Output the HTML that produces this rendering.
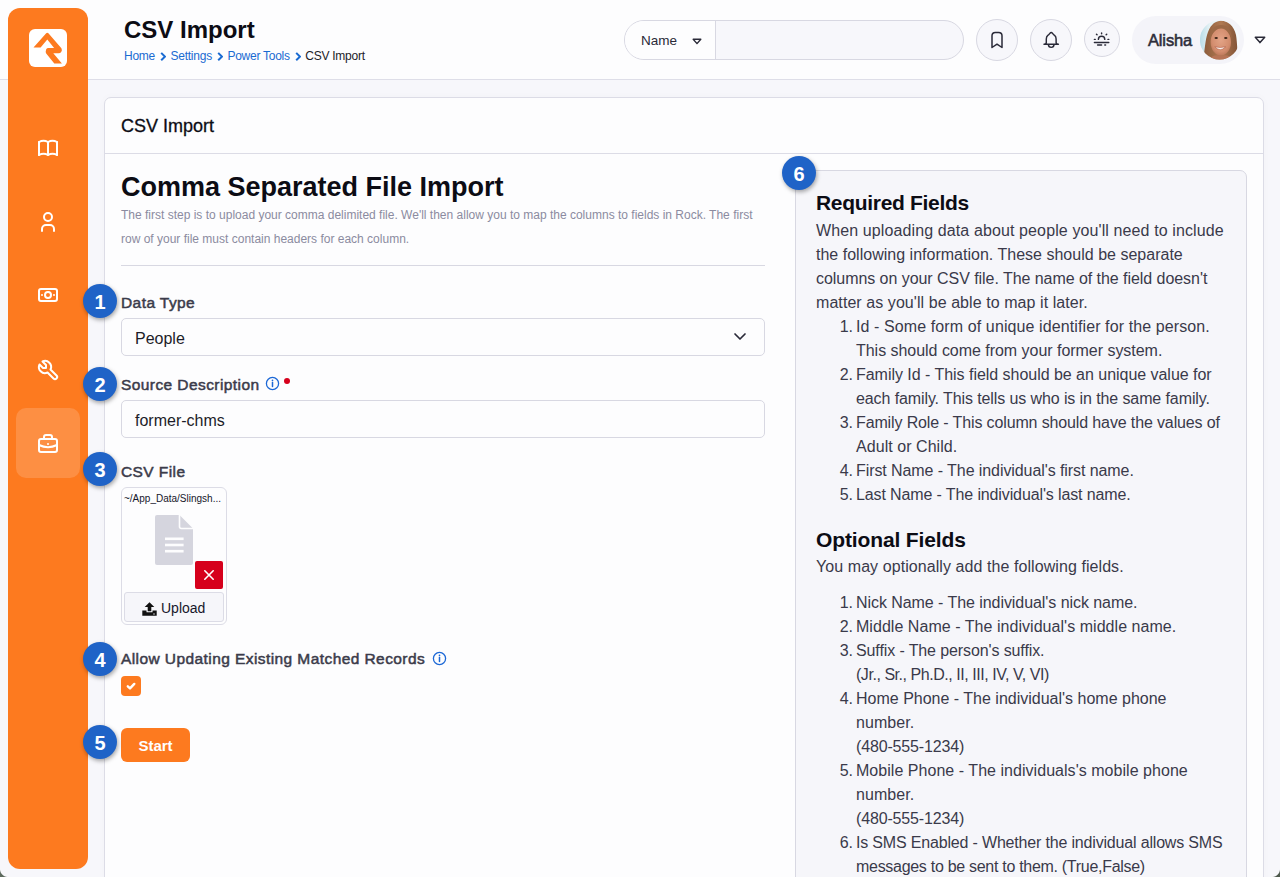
<!DOCTYPE html>
<html><head><meta charset="utf-8">
<style>
*{box-sizing:border-box;margin:0;padding:0}
html,body{width:1280px;height:877px;overflow:hidden}
body{position:relative;background:#f7f7fb;font-family:"Liberation Sans",sans-serif;color:#24242f}
.abs{position:absolute}
#hdr{left:0;top:0;width:1280px;height:80px;background:#fdfdfe;border-bottom:1px solid #dedee8}
#side{left:8px;top:8px;width:80px;height:861px;background:#fd7a1f;border-radius:12px}
#active{left:16px;top:408px;width:64px;height:70px;border-radius:10px;background:rgba(255,255,255,.16)}
#title{left:124px;top:15px;font-size:24px;font-weight:bold;color:#0c0c14;line-height:30px;white-space:nowrap}
#crumb{left:124px;top:48px;font-size:12px;letter-spacing:-0.25px;line-height:16px;white-space:nowrap;color:#1c1c28}
#crumb span.a{color:#1a6bd2}
#crumb svg{display:inline-block;vertical-align:-1px;margin:0 4.5px 0 5px}
#search{left:624px;top:20px;width:340px;height:40px;border:1px solid #d8d8e2;border-radius:20px;background:#f7f7fb;overflow:hidden}
#search .nm{position:absolute;left:0;top:0;width:91px;height:38px;background:#fdfdfe;border-right:1px solid #d8d8e2}
.cbtn{position:absolute;border:1px solid #d8d8e2;border-radius:50%;background:#f7f7fb}
#user{left:1132px;top:16px;width:112px;height:48px;border-radius:24px;background:#f4f4f9}
#card{left:104px;top:97px;width:1160px;height:800px;background:#fdfdfe;border:1px solid #dcdce6;border-radius:7px;box-shadow:0 0 8px rgba(30,30,80,.025)}
#cardhdr{left:0;top:0;width:100%;height:56px;border-bottom:1px solid #dcdce6}
#cardtitle{left:16px;top:17px;font-size:18px;line-height:22px;color:#0c0c14;-webkit-text-stroke:0.3px #0c0c14}
.badge{position:absolute;width:34px;height:34px;border-radius:50%;background:#1f63c7;color:#fff;font-weight:bold;font-size:20px;line-height:37px;text-align:center;box-shadow:1px 2px 4px rgba(0,0,0,.35)}
.lbl{position:absolute;left:121px;font-size:15.5px;font-weight:normal;-webkit-text-stroke:0.5px #3b3b4a;letter-spacing:0.42px;color:#3b3b4a;white-space:nowrap;line-height:18px}
.inp{position:absolute;left:121px;width:644px;height:38px;border:1px solid #d8d8e2;border-radius:5px;background:#fdfdfe;font-size:16px;line-height:40px;padding-left:13px;color:#1c1c28}
#panel{left:795px;top:170px;width:452px;height:720px;background:#f6f6fa;border:1px solid #d8d8e2;border-radius:7px}
.pt{position:absolute;white-space:nowrap;font-size:16px;color:#3a3a4a;line-height:24px}
.num{left:816px;width:37px;text-align:right}
.ph{position:absolute;white-space:nowrap;font-size:21px;font-weight:bold;color:#0c0c14;line-height:26px}
</style></head><body>
<div id="hdr" class="abs"></div>
<div id="side" class="abs"></div>
<svg class="abs" style="left:29px;top:29px" width="38" height="38" viewBox="0 0 38 38">
<rect x="0" y="0" width="38" height="38" rx="6" fill="#fff"/>
<path d="M4.5 18.6 L17.2 4.2 Q18.3 3.1 19.4 4.2 L32.4 19.3 Q33.5 21.2 32.2 23.1 Q31.2 24.3 29.6 24.3 L24.3 24.3 L32.9 34.4 L25.3 34.4 L17.2 24.6 Q16.2 23.2 17.1 20.4 Q17.8 19.1 19.4 19.1 L25.1 19.1 L18.3 10.5 L11.6 18.6 Z" fill="#fd7a1f"/>
</svg>
<div id="active" class="abs"></div>

<svg class="abs" style="left:36px;top:135.5px" width="24" height="24" viewBox="0 0 24 24" fill="none" stroke="#fff" stroke-width="2" stroke-linecap="round" stroke-linejoin="round"><path d="M3 19a9 9 0 0 1 9 0a9 9 0 0 1 9 0"/><path d="M3 6a9 9 0 0 1 9 0a9 9 0 0 1 9 0"/><path d="M3 6l0 13"/><path d="M12 6l0 13"/><path d="M21 6l0 13"/></svg>
<svg class="abs" style="left:36px;top:209.5px" width="24" height="24" viewBox="0 0 24 24" fill="none" stroke="#fff" stroke-width="2" stroke-linecap="round" stroke-linejoin="round"><path d="M8 7a4 4 0 1 0 8 0a4 4 0 0 0 -8 0"/><path d="M6 21v-2a4 4 0 0 1 4 -4h4a4 4 0 0 1 4 4v2"/></svg>
<svg class="abs" style="left:36px;top:283px" width="24" height="24" viewBox="0 0 24 24" fill="none" stroke="#fff" stroke-width="2" stroke-linecap="round" stroke-linejoin="round"><path d="M9 12a3 3 0 1 0 6 0a3 3 0 1 0 -6 0"/><path d="M3 8a2 2 0 0 1 2 -2h14a2 2 0 0 1 2 2v8a2 2 0 0 1 -2 2h-14a2 2 0 0 1 -2 -2z"/><path d="M18 12l.01 0"/><path d="M6 12l.01 0"/></svg>
<svg class="abs" style="left:36px;top:358px" width="24" height="24" viewBox="0 0 24 24" fill="none" stroke="#fff" stroke-width="2" stroke-linecap="round" stroke-linejoin="round"><path d="M7 10h3v-3l-3.5 -3.5a6 6 0 0 1 8 8l6 6a2 2 0 0 1 -3 3l-6 -6a6 6 0 0 1 -8 -8l3.5 3.5"/></svg>
<svg class="abs" style="left:36px;top:431.5px" width="24" height="24" viewBox="0 0 24 24" fill="none" stroke="#fff" stroke-width="2" stroke-linecap="round" stroke-linejoin="round"><path d="M3 9a2 2 0 0 1 2 -2h14a2 2 0 0 1 2 2v9a2 2 0 0 1 -2 2h-14a2 2 0 0 1 -2 -2l0 -9z"/><path d="M8 7v-2a2 2 0 0 1 2 -2h4a2 2 0 0 1 2 2v2"/><path d="M12 12l0 .01"/><path d="M3 13a20 20 0 0 0 18 0"/></svg>

<div id="title" class="abs">CSV Import</div>
<div id="crumb" class="abs"><span class="a">Home</span><svg width="6" height="9" viewBox="0 0 6 9"><path d="M1.2 0.9l3.7 3.7l-3.7 3.7" fill="none" stroke="#1a6bd2" stroke-width="2"/></svg><span class="a">Settings</span><svg width="6" height="9" viewBox="0 0 6 9"><path d="M1.2 0.9l3.7 3.7l-3.7 3.7" fill="none" stroke="#1a6bd2" stroke-width="2"/></svg><span class="a">Power Tools</span><svg width="6" height="9" viewBox="0 0 6 9"><path d="M1.2 0.9l3.7 3.7l-3.7 3.7" fill="none" stroke="#1a6bd2" stroke-width="2"/></svg>CSV Import</div>

<div id="search" class="abs"><div class="nm"></div></div>
<div class="abs" style="left:641px;top:33px;font-size:13.5px;line-height:16px;color:#2a2a38">Name</div>
<svg class="abs" style="left:692px;top:38px" width="10" height="7" viewBox="0 0 10 7"><path d="M1.2 1.2 H8.8 L5 5.6 Z" fill="none" stroke="#2a2a38" stroke-width="1.4" stroke-linejoin="round"/></svg>
<div class="cbtn" style="left:976px;top:19px;width:42px;height:42px"></div>
<div class="cbtn" style="left:1030px;top:19px;width:42px;height:42px"></div>
<div class="cbtn" style="left:1084px;top:21px;width:36px;height:36px"></div>

<svg class="abs" style="left:987.2px;top:29.8px" width="20" height="20" viewBox="0 0 24 24" fill="none" stroke="#2a2a38" stroke-width="1.8" stroke-linejoin="round"><path d="M18 7v14l-6 -4l-6 4v-14a4 4 0 0 1 4 -4h4a4 4 0 0 1 4 4z"/></svg>
<svg class="abs" style="left:1040px;top:28px" width="22" height="22" viewBox="0 0 22 22" fill="none" stroke="#2a2a38" stroke-width="1.45" stroke-linejoin="round" stroke-linecap="round"><path d="M11.2 4.4 C10 4.4 9.6 6.3 7.8 7.4 C6.5 8.3 6.3 9.6 6.3 11 V14.6 C6.3 15.5 5.2 16.2 4 16.2 H18.4 C17.2 16.2 16.1 15.5 16.1 14.6 V11 C16.1 9.6 15.9 8.3 14.6 7.4 C12.8 6.3 12.4 4.4 11.2 4.4 Z"/><path d="M8.4 16.6 a2.8 2.8 0 0 0 5.6 0"/></svg>
<svg class="abs" style="left:1092.4px;top:28.8px" width="19.2" height="19.2" viewBox="0 0 24 24" fill="none" stroke="#2a2a38" stroke-width="1.8" stroke-linecap="round" stroke-linejoin="round"><path d="M3 13h1"/><path d="M20 13h1"/><path d="M5.6 6.6l.7 .7"/><path d="M18.4 6.6l-.7 .7"/><path d="M8 13a4 4 0 1 1 8 0"/><path d="M3 17h18"/><path d="M7 20h5"/><path d="M16 20h1"/><path d="M12 5v1"/></svg>

<div id="user" class="abs"></div>
<div class="abs" style="left:1148px;top:30px;font-size:16.5px;font-weight:normal;-webkit-text-stroke:0.55px #2d2d3a;letter-spacing:-0.15px;line-height:20px;color:#2d2d3a">Alisha</div>
<svg class="abs" style="left:1200px;top:20px" width="40" height="40" viewBox="0 0 40 40">
<defs><clipPath id="av"><circle cx="19.6" cy="19.9" r="19.7"/></clipPath>
<linearGradient id="bgG" x1="0" y1="0" x2="1" y2="0"><stop offset="0" stop-color="#b9dde8"/><stop offset="0.25" stop-color="#e6f2f5"/><stop offset="1" stop-color="#f6f9fb"/></linearGradient>
<linearGradient id="hG" x1="0" y1="0" x2="1" y2="0"><stop offset="0" stop-color="#8a5a3a"/><stop offset="0.5" stop-color="#b07a52"/><stop offset="1" stop-color="#7e5034"/></linearGradient>
<radialGradient id="fG" cx="0.5" cy="0.42" r="0.62"><stop offset="0" stop-color="#e3a386"/><stop offset="0.7" stop-color="#d38d6e"/><stop offset="1" stop-color="#b87456"/></radialGradient></defs>
<g clip-path="url(#av)">
<rect width="40" height="40" fill="url(#bgG)"/>
<path d="M3 40 C5 30 5 20 8 12 C11 4 16 0.8 21 0.8 C28 1 34 6 36 15 C37.5 24 37 33 39 40 Z" fill="url(#hG)"/>
<ellipse cx="20.8" cy="22" rx="10.2" ry="13.6" fill="url(#fG)"/>
<path d="M10 19 C10.5 9 15 5 21 5 C27 5 31.5 9 31.8 19 C30 12.5 26.5 8.5 21.5 8.3 C16 8.5 12.5 12.5 10 19Z" fill="#9c6946"/>
<ellipse cx="16.2" cy="18" rx="1.7" ry="1.1" fill="#3a2216"/>
<ellipse cx="25.8" cy="18" rx="1.7" ry="1.1" fill="#3a2216"/>
<path d="M14.8 26.8 Q20.3 32.5 25.6 26.8 Q20.3 28.3 14.8 26.8Z" fill="#fbf6f2" stroke="#a8503f" stroke-width="0.5"/>
<path d="M9 40 C11 35.5 15 34.5 21 35.5 C27 34.5 30.5 35.5 33 40Z" fill="#b77456"/>
</g></svg>
<svg class="abs" style="left:1254px;top:36px" width="12" height="8" viewBox="0 0 12 8"><path d="M1.3 1.3 H10.7 L6 6.6 Z" fill="none" stroke="#2a2a38" stroke-width="1.5" stroke-linejoin="round"/></svg>

<div id="card" class="abs">
  <div id="cardhdr" class="abs"><div id="cardtitle" class="abs">CSV Import</div></div>
</div>

<div class="abs" style="left:121px;top:170px;font-size:27px;font-weight:bold;color:#0c0c14;line-height:34px;white-space:nowrap">Comma Separated File Import</div>
<div class="abs" style="left:121px;top:203px;font-size:12px;color:#8b8ba0;line-height:24px;white-space:nowrap">The first step is to upload your comma delimited file. We'll then allow you to map the columns to fields in Rock. The first<br>row of your file must contain headers for each column.</div>
<div class="abs" style="left:121px;top:265px;width:644px;height:1px;background:#d8d8e2"></div>

<div class="lbl" style="top:294px">Data Type</div>
<div class="inp" style="top:318px">People</div>
<svg class="abs" style="left:733px;top:332px" width="14" height="10" viewBox="0 0 14 10"><path d="M2 2 L7 7 L12 2" fill="none" stroke="#2a2a38" stroke-width="1.7" stroke-linecap="round" stroke-linejoin="round"/></svg>
<div class="lbl" style="top:376px">Source Description</div>
<svg class="abs" style="left:265px;top:376px" width="15" height="15" viewBox="0 0 15 15"><circle cx="7.5" cy="7.5" r="6.1" fill="none" stroke="#1c68d6" stroke-width="1.3"/><path d="M7.5 6.6 V10.6" stroke="#1c68d6" stroke-width="1.5" stroke-linecap="round"/><circle cx="7.5" cy="4.4" r="0.85" fill="#1c68d6"/></svg>
<div class="abs" style="left:284px;top:378px;width:6px;height:6px;border-radius:50%;background:#d6001c"></div>
<div class="inp" style="top:400px">former-chms</div>
<div class="lbl" style="top:463px">CSV File</div>

<div class="abs" style="left:121px;top:487px;width:106px;height:138px;border:1px solid #dcdce6;border-radius:6px;background:#fdfdfe"></div>
<div class="abs" style="left:124px;top:492px;width:100px;font-size:10px;line-height:14px;color:#16162a;white-space:nowrap">~/App_Data/Slingsh...</div>
<svg class="abs" style="left:155px;top:515px" width="38" height="50" viewBox="0 0 38 50">
<path d="M2 0 H24.5 L38 13.5 V48 a2 2 0 0 1 -2 2 H2 a2 2 0 0 1 -2 -2 V2 a2 2 0 0 1 2 -2z" fill="#d5d5de"/>
<path d="M24.5 0 V11.5 a2 2 0 0 0 2 2 H38" fill="none" stroke="#fdfdfe" stroke-width="1.6"/>
<rect x="10" y="22.5" width="18.6" height="2.6" fill="#fdfdfe"/>
<rect x="10" y="28.7" width="18.6" height="2.6" fill="#fdfdfe"/>
<rect x="10" y="34.9" width="18.6" height="2.6" fill="#fdfdfe"/>
</svg>
<div class="abs" style="left:195px;top:561px;width:28px;height:28px;background:#d6001c;border-radius:2px"></div>
<svg class="abs" style="left:195px;top:561px" width="28" height="28" viewBox="0 0 28 28"><path d="M9.8 9.8 L18.2 18.2 M18.2 9.8 L9.8 18.2" stroke="#fff" stroke-width="1.6" stroke-linecap="round"/></svg>
<div class="abs" style="left:124px;top:592px;width:100px;height:30px;background:#f6f6fa;border:1px solid #dcdce6;border-radius:3px"></div>
<svg class="abs" style="left:142px;top:601.5px" width="15" height="14" viewBox="0 0 15 14">
<path d="M7.5 0.2 L12.3 5 H9.3 V9.3 H5.7 V5 H2.7 Z" fill="#111"/>
<path d="M0.3 8.5 H4.5 V10.3 H10.5 V8.5 H14.7 V13.8 H0.3 Z" fill="#111"/>
<circle cx="12" cy="12" r="0.7" fill="#f6f6fa"/>
</svg>
<div class="abs" style="left:161px;top:599px;font-size:14px;line-height:18px;color:#16162a;white-space:nowrap">Upload</div>

<div class="lbl" style="top:650px">Allow Updating Existing Matched Records</div>
<svg class="abs" style="left:432px;top:651px" width="15" height="15" viewBox="0 0 15 15"><circle cx="7.5" cy="7.5" r="6.1" fill="none" stroke="#1c68d6" stroke-width="1.3"/><path d="M7.5 6.6 V10.6" stroke="#1c68d6" stroke-width="1.5" stroke-linecap="round"/><circle cx="7.5" cy="4.4" r="0.85" fill="#1c68d6"/></svg>
<div class="abs" style="left:121px;top:676px;width:20px;height:20px;border-radius:4px;background:#fd7a1f"></div>
<svg class="abs" style="left:121px;top:676px" width="20" height="20" viewBox="0 0 20 20"><path d="M6.8 10.3 L9 12.4 L13.3 7.9" fill="none" stroke="#fff" stroke-width="2.4" stroke-linecap="round" stroke-linejoin="round"/></svg>
<div class="abs" style="left:121px;top:728px;width:69px;height:34px;border-radius:6px;background:#fd7a1f;color:#fff;font-weight:bold;font-size:15px;line-height:36px;text-align:center">Start</div>

<div id="panel" class="abs"></div>
<div class="ph" style="left:816px;top:190px;letter-spacing:-0.313px;">Required Fields</div>
<div class="pt" style="left:816px;top:219px;letter-spacing:0.113px;">When uploading data about people you&#x27;ll need to include</div>
<div class="pt" style="left:816px;top:243px;letter-spacing:0.012px;">the following information. These should be separate</div>
<div class="pt" style="left:816px;top:267px;letter-spacing:-0.051px;">columns on your CSV file. The name of the field doesn&#x27;t</div>
<div class="pt" style="left:816px;top:291px;letter-spacing:0.068px;">matter as you&#x27;ll be able to map it later.</div>
<div class="pt num" style="top:315px">1.</div>
<div class="pt" style="left:856px;top:315px;letter-spacing:0.102px;">Id - Some form of unique identifier for the person.</div>
<div class="pt" style="left:856px;top:339px;letter-spacing:-0.032px;">This should come from your former system.</div>
<div class="pt num" style="top:363px">2.</div>
<div class="pt" style="left:856px;top:363px;letter-spacing:-0.031px;">Family Id - This field should be an unique value for</div>
<div class="pt" style="left:856px;top:387px;letter-spacing:-0.102px;">each family. This tells us who is in the same family.</div>
<div class="pt num" style="top:411px">3.</div>
<div class="pt" style="left:856px;top:411px;letter-spacing:-0.131px;">Family Role - This column should have the values of</div>
<div class="pt" style="left:856px;top:435px;letter-spacing:0.053px;">Adult or Child.</div>
<div class="pt num" style="top:459px">4.</div>
<div class="pt" style="left:856px;top:459px;letter-spacing:-0.080px;">First Name - The individual&#x27;s first name.</div>
<div class="pt num" style="top:483px">5.</div>
<div class="pt" style="left:856px;top:483px;letter-spacing:-0.121px;">Last Name - The individual&#x27;s last name.</div>
<div class="ph" style="left:816px;top:527px;letter-spacing:-0.127px;">Optional Fields</div>
<div class="pt" style="left:816px;top:555px;letter-spacing:0.073px;">You may optionally add the following fields.</div>
<div class="pt num" style="top:591px">1.</div>
<div class="pt" style="left:856px;top:591px;letter-spacing:-0.059px;">Nick Name - The individual&#x27;s nick name.</div>
<div class="pt num" style="top:615px">2.</div>
<div class="pt" style="left:856px;top:615px;letter-spacing:0.042px;">Middle Name - The individual&#x27;s middle name.</div>
<div class="pt num" style="top:639px">3.</div>
<div class="pt" style="left:856px;top:639px;letter-spacing:-0.110px;">Suffix - The person&#x27;s suffix.</div>
<div class="pt" style="left:856px;top:663px;letter-spacing:-0.454px;">(Jr., Sr., Ph.D., II, III, IV, V, VI)</div>
<div class="pt num" style="top:687px">4.</div>
<div class="pt" style="left:856px;top:687px;">Home Phone - The individual&#x27;s home phone</div>
<div class="pt" style="left:856px;top:711px;letter-spacing:0.057px;">number.</div>
<div class="pt" style="left:856px;top:735px;letter-spacing:-0.157px;">(480-555-1234)</div>
<div class="pt num" style="top:759px">5.</div>
<div class="pt" style="left:856px;top:759px;letter-spacing:0.038px;">Mobile Phone - The individuals&#x27;s mobile phone</div>
<div class="pt" style="left:856px;top:783px;letter-spacing:0.057px;">number.</div>
<div class="pt" style="left:856px;top:807px;letter-spacing:-0.157px;">(480-555-1234)</div>
<div class="pt num" style="top:831px">6.</div>
<div class="pt" style="left:856px;top:831px;letter-spacing:-0.176px;">Is SMS Enabled - Whether the individual allows SMS</div>
<div class="pt" style="left:856px;top:855px;letter-spacing:-0.293px;">messages to be sent to them. (True,False)</div>

<div class="badge" style="left:83px;top:284px">1</div>
<div class="badge" style="left:83px;top:367px">2</div>
<div class="badge" style="left:83px;top:452px">3</div>
<div class="badge" style="left:83px;top:642px">4</div>
<div class="badge" style="left:83px;top:725px">5</div>
<div class="badge" style="left:782px;top:156px">6</div>
<div class="abs" style="left:0;top:869px;width:8px;height:8px;background:radial-gradient(circle at 8px 0, rgba(0,0,0,0) 7.5px, #5d6a5e 8.5px)"></div>
<div class="abs" style="left:1272px;top:869px;width:8px;height:8px;background:radial-gradient(circle at 0 0, rgba(0,0,0,0) 7.5px, #4f5a4e 8.5px)"></div>
</body></html>
